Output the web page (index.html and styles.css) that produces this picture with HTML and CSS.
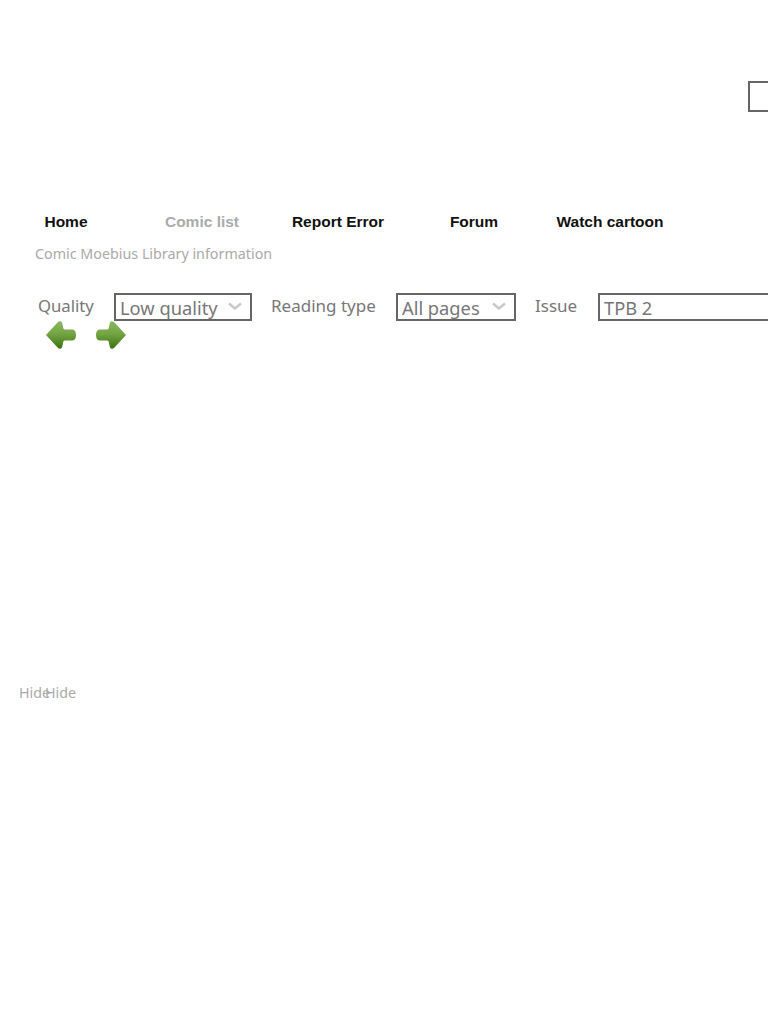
FILE: index.html
```html
<!DOCTYPE html>
<html lang="en">
<head>
<meta charset="utf-8">
<title>Comic Moebius</title>
<link rel="stylesheet" href="styles.css">
</head>
<body>
<header class="top">
  <input class="search" type="text" aria-label="Search">
</header>
<nav class="nav">
  <a class="nav-item">Home</a>
  <a class="nav-item nav-active">Comic list</a>
  <a class="nav-item">Report Error</a>
  <a class="nav-item">Forum</a>
  <a class="nav-item">Watch cartoon</a>
</nav>
<p class="info">Comic Moebius Library information</p>
<form class="controls">
  <span class="label label-quality">Quality</span>
  <span class="select select-quality"><span>Low quality</span><svg class="chev" viewBox="0 0 14 8"><path d="M1 1.5 7 6.5 13 1.5" fill="none" stroke="#c8c8c8" stroke-width="2.4"/></svg></span>
  <span class="label label-type">Reading type</span>
  <span class="select select-type"><span>All pages</span><svg class="chev" viewBox="0 0 14 8"><path d="M1 1.5 7 6.5 13 1.5" fill="none" stroke="#c8c8c8" stroke-width="2.4"/></svg></span>
  <span class="label label-issue">Issue</span>
  <span class="select select-issue"><span>TPB 2</span></span>
</form>
<div class="arrows">
  <svg class="arrow" viewBox="0 0 30 28"><defs><linearGradient id="g1" x1="0" y1="0" x2="0" y2="1"><stop offset="0" stop-color="#8ab862"/><stop offset=".45" stop-color="#74a544"/><stop offset="1" stop-color="#3c7210"/></linearGradient></defs><path d="M0 14 12 1Q14.500 -.8 16 1.500L17 5.500Q17 8.500 19 8.500H26.500Q30 9 30 14T26.500 19.500H19Q17 19.500 17 22.500L16 26.500Q14.500 28.800 12 27Z" fill="url(#g1)"/></svg>
  <svg class="arrow" viewBox="0 0 30 28"><defs><linearGradient id="g2" x1="0" y1="0" x2="0" y2="1"><stop offset="0" stop-color="#8ab862"/><stop offset=".45" stop-color="#74a544"/><stop offset="1" stop-color="#3c7210"/></linearGradient></defs><path d="M30 14 18 1Q15.500 -.8 14 1.500L13 5.500Q13 8.500 11 8.500H3.500Q0 9 0 14T3.500 19.500H11Q13 19.500 13 22.500L14 26.500Q15.500 28.800 18 27Z" fill="url(#g2)"/></svg>
</div>
<div class="hides">
  <span class="hide">Hide</span>
  <span class="hide">Hide</span>
</div>
</body>
</html>
```
FILE: styles.css
```css
html, body {
  margin: 0;
  padding: 0;
  background: #fff;
  overflow-x: hidden;
}
body {
  width: 768px;
  height: 1024px;
  overflow: hidden;
  font-family: "Noto Sans", "Open Sans", sans-serif;
}
.top {
  height: 208px;
  padding: 81px 0 0 748px;
  box-sizing: border-box;
}
.search {
  display: block;
  width: 200px;
  height: 31px;
  box-sizing: border-box;
  border: 2px solid #666;
  padding: 0;
  background: #fff;
}
.nav {
  display: grid;
  grid-template-columns: repeat(5, 136px);
  margin-left: -2px;
  height: 28px;
}
.nav-item {
  font: bold 15.5px/28px "Liberation Sans", Arial, sans-serif;
  color: #111;
  text-align: center;
}
.nav-active {
  color: #aaa;
}
.info {
  margin: 6px 0 0 35px;
  font-size: 14.3px;
  line-height: 24px;
  color: #aaa;
}
.controls {
  display: flex;
  align-items: center;
  height: 28px;
  margin-top: 27px;
  padding-left: 38px;
  white-space: nowrap;
}
.label {
  flex: none;
  font-size: 17px;
  line-height: 26px;
  color: #777;
  margin-top: -3px;
}
.label-quality { width: 76px; font-size: 16.7px; }
.label-type { width: 125px; margin-left: 19px; }
.label-issue { width: 63px; margin-left: 19px; }
.select {
  display: flex;
  align-items: center;
  justify-content: space-between;
  box-sizing: border-box;
  height: 28px;
  border: 2px solid #666;
  padding: 0 8px 0 4px;
  font-size: 18.3px;
  color: #777;
  background: #fff;
  flex: none;
}
.select-quality { width: 138px; }
.select-type { width: 120px; }
.select-issue { width: 260px; }
.chev {
  width: 14px;
  height: 8px;
  margin-top: -3px;
}
.arrows {
  display: flex;
  gap: 20px;
  margin: 0 0 0 46px;
}
.arrow {
  width: 30px;
  height: 28px;
}
.hides {
  display: grid;
  grid-template-columns: 26px 26px;
  margin: 332px 0 0 19px;
}
.hide {
  font-size: 14.3px;
  line-height: 24px;
  color: #aaa;
}
```
